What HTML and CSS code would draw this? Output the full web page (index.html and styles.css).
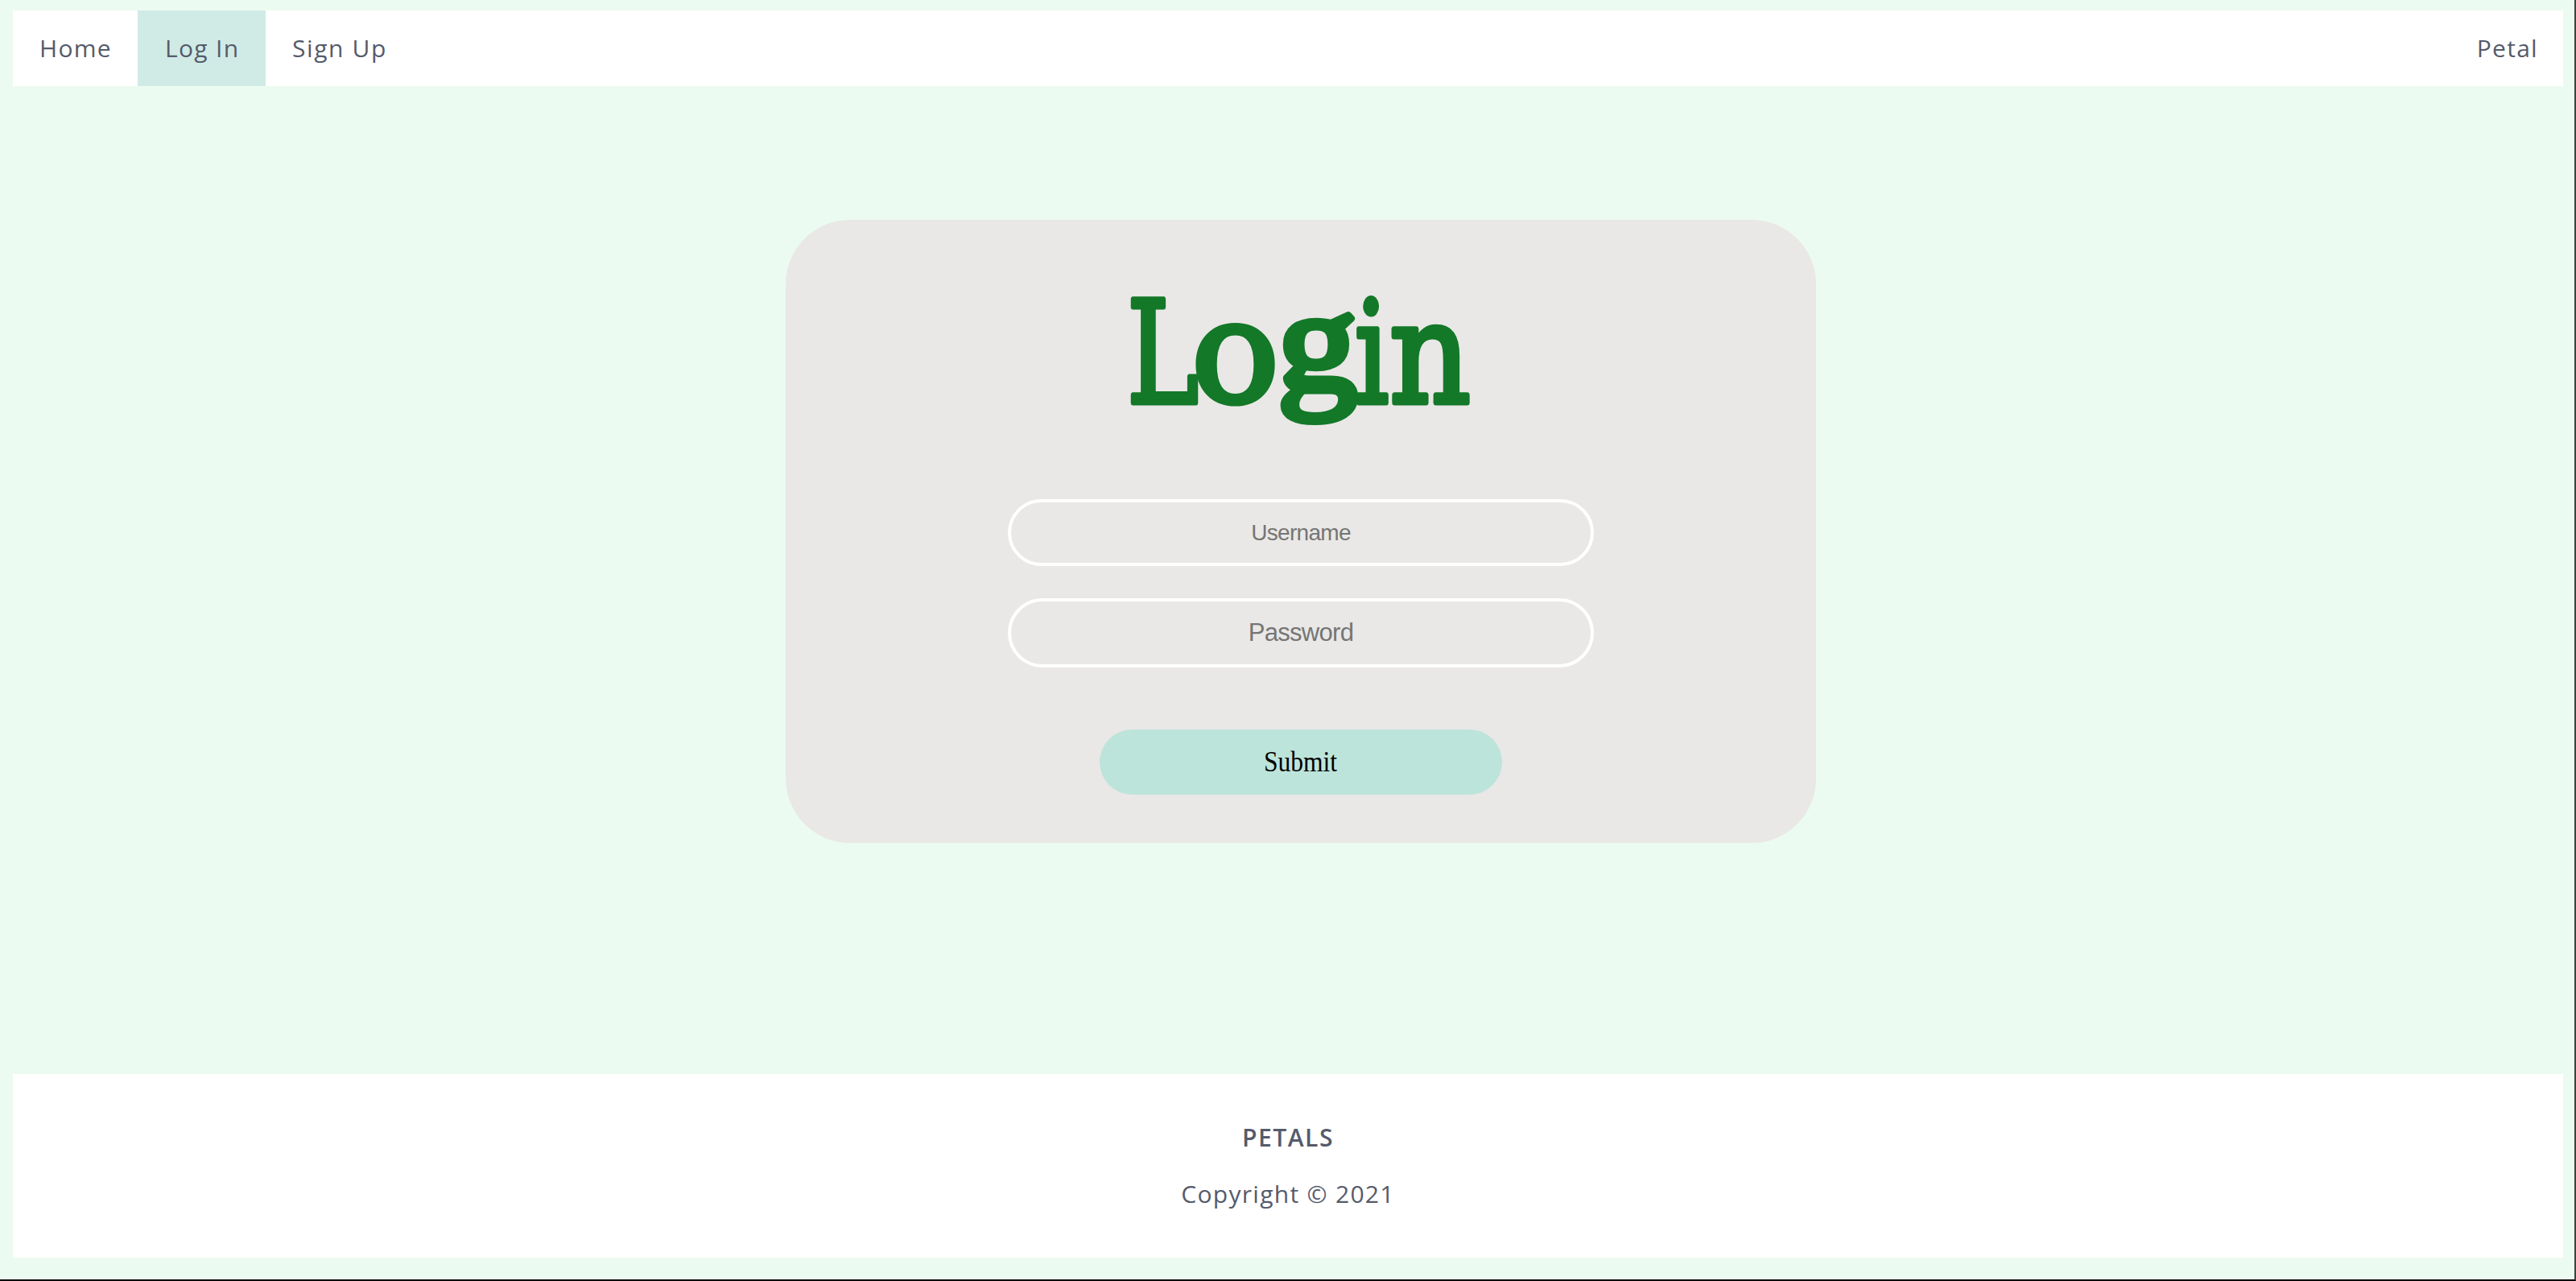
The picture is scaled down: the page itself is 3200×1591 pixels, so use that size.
FILE: index.html
```html
<!DOCTYPE html>
<html lang="en">
<head>
<meta charset="utf-8">
<title>Petal</title>
<link rel="stylesheet" href="styles.css">
</head>
<body>
<nav class="nav">
  <a class="nav-link home">Home</a>
  <a class="nav-link login active">Log In</a>
  <a class="nav-link signup">Sign Up</a>
  <a class="nav-link brand">Petal</a>
</nav>
<main class="main">
  <form class="card">
    <h1 class="title">
      <svg class="title-art" width="440" height="180" viewBox="1396 355 440 180">
        <text transform="translate(1400 500) scale(.76 1)">L</text>
        <text transform="translate(1480 499) scale(1.03 1)">o</text>
        <text class="g" transform="translate(1587 485) scale(1.1 1)">g</text>
        <text transform="translate(1683 500) scale(.75 1)">i</text>
        <text transform="translate(1726 500) scale(.89 1)">n</text>
      </svg>
    </h1>
    <input class="field username" type="text" placeholder="Username">
    <input class="field password" type="password" placeholder="Password">
    <button class="submit" type="button"><span class="submit-label">Submit</span></button>
  </form>
</main>
<footer class="footer">
  <p class="footer-name">PETALS</p>
  <p class="copyright">Copyright © 2021</p>
</footer>
</body>
</html>
```
FILE: styles.css
```css
* { box-sizing: border-box; }
html { background: #ecfbf1; }
body {
  margin: 0;
  height: 1591px;
  padding: 13px 14px 0 16px;
  border-right: 2px solid #3c433c;
  border-bottom: 2px solid #000;
  background: #ecfbf1;
  color: #555b6b;
  font-family: "Open Sans", sans-serif;
  font-size: 30px;
  display: flex;
  flex-direction: column;
  overflow: hidden;
}
.nav { display: flex; height: 94px; background: #fff; }
.nav-link { padding: 0 0 0 33px; line-height: 94px; letter-spacing: 1.3px; white-space: nowrap; }
.home { width: 155px; }
.login { width: 159px; padding-left: 34px; }
.active { background: #d0ebe6; }
.signup { width: 200px; letter-spacing: 1.6px; }
.brand { margin-left: auto; padding: 0 31px 0 0; }
.main { height: 1227px; padding: 166px 0 0 960px; }
.card {
  width: 1280px;
  height: 774px;
  border-radius: 80px;
  background: #e9e8e6;
  display: flex;
  flex-direction: column;
  align-items: center;
  padding-top: 82px;
}
.title { margin: 0 0 85px; height: 180px; line-height: 0; }
.title-art {
  overflow: visible;
  fill: #137828;
  stroke: #137828;
  stroke-width: 7px;
  stroke-linejoin: round;
  font-family: "DejaVu Serif", serif;
  font-size: 176px;
  font-weight: 400;
}
.g { font-family: "Liberation Serif", serif; font-size: 180px; stroke-width: 9px; }
.field {
  width: 728px;
  border: 4px solid #fff;
  border-radius: 43px;
  background: transparent;
  text-align: center;
  font-family: "Liberation Sans", Arial, sans-serif;
  letter-spacing: -.7px;
  padding: 0;
  flex: none;
}
.field::placeholder { color: #757575; }
.username { height: 83px; font-size: 28px; margin-bottom: 40px; }
.password { height: 86px; font-size: 31px; margin-bottom: 77px; }
.submit {
  width: 500px;
  height: 81px;
  border: 0;
  border-radius: 41px;
  background: #bde4da;
  color: #000;
  font-family: "Liberation Serif", serif;
  font-size: 35px;
}
.submit-label { display: inline-block; transform: scaleX(.9); }
.footer { height: 228px; background: #fff; text-align: center; padding-top: 59px; }
.footer p { margin: 0; line-height: 40px; }
.footer-name { font-weight: 600; letter-spacing: 1.5px; }
.footer .copyright { margin-top: 30px; letter-spacing: 1.3px; }
```
